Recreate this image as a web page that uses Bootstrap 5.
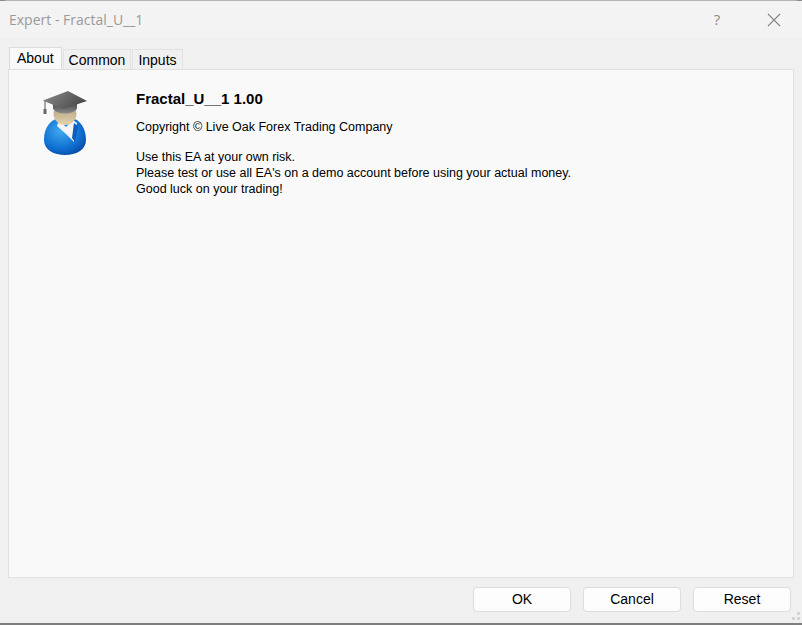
<!DOCTYPE html>
<html lang="en">
<head>
    <meta charset="UTF-8">
    <title>Expert - Fractal_U__1</title>
    <link rel="stylesheet" href="https://cdn.jsdelivr.net/npm/bootstrap@5.3.0/dist/css/bootstrap.min.css">
    <style>
        html, body { height: 100%; background-color: #8a8a8a; overflow: hidden; }
        .dlg-window { height: 625px; background-color: #f0f0f0; border-top: 1px solid #b4b4b4; border-bottom: 2px solid #7d7d7d; border-radius: 8px 8px 0 0; font-family: "Liberation Sans", Arial, sans-serif; font-size: 12.5px; color: #000; }
        .dlg-title { height: 37px; padding: 0 0 0 9px; background-color: #f3f3f3; font-family: "Open Sans", sans-serif; font-size: 14px; color: #9a9a9a; }
        .dlg-help { width: 16px; margin-right: 42px; font-size: 15px; color: #8c8c8c; text-align: center; }
        .dlg-close { margin-right: 21px; }
        .dlg-tabs { padding-left: 9px; margin-top: 9px; border: 0; font-size: 14px; align-items: flex-end; }
        .dlg-tabs .nav-link { height: 20px; padding: 0 5px; line-height: 20px; margin: 0 1px 0 0; border: 1px solid #e2e2e2; border-bottom: 0; border-radius: 0; color: #000; background-color: #f0f0f0; }
        .dlg-tabs .nav-link.active { height: 22px; padding: 0 7px; background-color: #f9f9f9; border-color: #dcdcdc; color: #000; }
        .dlg-panel { flex: 1 1 auto; margin: 0 8px 0 8px; background-color: #f9f9f9; border: 1px solid #e0e0e0; padding: 20px 0 0 33px; }
        .dlg-icon { width: 46px; height: 66px; margin-right: 48px; flex: none; }
        .dlg-name { font-size: 15px; font-weight: 700; line-height: 18px; margin: 0 0 11px; }
        .dlg-copy { line-height: 16px; margin: 0 0 14px; }
        .dlg-desc { line-height: 16px; margin: 0; }
        .dlg-foot { height: 45px; padding: 9px 11px 0 0; position: relative; }
        .dlg-btn { width: 98px; height: 25px; padding: 0; font-size: 14px; background-color: #fdfdfd; border: 1px solid #dcdcdc; border-radius: 4px; color: #000; }
        .dlg-grip { position: absolute; right: 1px; bottom: 1px; }
    </style>
</head>
<body>
    <div class="dlg-window d-flex flex-column">
        <div class="dlg-title d-flex align-items-center">
            <div class="flex-grow-1">Expert - Fractal_U__1</div>
            <div class="dlg-help">?</div>
            <svg class="dlg-close" width="14" height="14" viewBox="0 0 14 14"><path d="M1 1L13 13M13 1L1 13" stroke="#858585" stroke-width="1.1" fill="none"/></svg>
        </div>

        <ul class="nav nav-tabs dlg-tabs">
            <li class="nav-item"><a class="nav-link active" href="#">About</a></li>
            <li class="nav-item"><a class="nav-link" href="#">Common</a></li>
            <li class="nav-item"><a class="nav-link" href="#">Inputs</a></li>
        </ul>

        <div class="dlg-panel d-flex">
            <svg class="dlg-icon" viewBox="0 0 46 66">
                <defs>
                    <linearGradient id="capTop" x1="0" y1="0" x2="1" y2="0.4"><stop offset="0" stop-color="#8c8c8c"/><stop offset="1" stop-color="#4c4c4c"/></linearGradient>
                    <linearGradient id="capBase" x1="0" y1="0" x2="0" y2="1"><stop offset="0" stop-color="#3c3c3c"/><stop offset="1" stop-color="#8a8a8a"/></linearGradient>
                    <linearGradient id="face" x1="0" y1="0" x2="0" y2="1"><stop offset="0" stop-color="#a89878"/><stop offset="1" stop-color="#e6d2ae"/></linearGradient>
                    <radialGradient id="suit" cx="0.4" cy="0.35" r="0.8"><stop offset="0" stop-color="#3fa9f0"/><stop offset="0.6" stop-color="#0f6fd0"/><stop offset="1" stop-color="#063f95"/></radialGradient>
                </defs>
                <path d="M2 50C2 36 10 29 17 28L23 34L30 28C38 30 44 38 44 50C44 60 34 65 23 65C12 65 2 60 2 50Z" fill="url(#suit)"/>
                <path d="M17 30L24 37L31 30L35 33L32 52L24 44L15 36Z" fill="#f4f4f4"/>
                <path d="M32 33L36 36L33 52L30 48Z" fill="#0c5fc0"/>
                <ellipse cx="23" cy="24" rx="11.5" ry="11" fill="url(#face)"/>
                <path d="M11 11V19C16 25 30 25 35 19V11Z" fill="url(#capBase)"/>
                <path d="M1 10.5L26 1L45 11L21 19Z" fill="url(#capTop)"/>
                <path d="M3 11V19" stroke="#555" stroke-width="1" fill="none"/>
                <rect x="1.5" y="19" width="3" height="5" fill="#6a6a6a"/>
            </svg>
            <div>
                <p class="dlg-name">Fractal_U__1 1.00</p>
                <p class="dlg-copy">Copyright © Live Oak Forex Trading Company</p>
                <p class="dlg-desc">Use this EA at your own risk.<br>Please test or use all EA's on a demo account before using your actual money.<br>Good luck on your trading!</p>
            </div>
        </div>

        <div class="dlg-foot d-flex justify-content-end gap-2">
            <button type="button" class="btn dlg-btn">OK</button>
            <button type="button" class="btn dlg-btn ms-1">Cancel</button>
            <button type="button" class="btn dlg-btn ms-1">Reset</button>
            <svg class="dlg-grip" width="10" height="10" viewBox="0 0 10 10"><path d="M6 0h3v3H6zM1 5h3v3H1zM6 5h3v3H6z" fill="#d4d4d4"/></svg>
        </div>
    </div>
    <script src="https://cdn.jsdelivr.net/npm/bootstrap@5.3.0/dist/js/bootstrap.bundle.min.js"></script>
</body>
</html>
